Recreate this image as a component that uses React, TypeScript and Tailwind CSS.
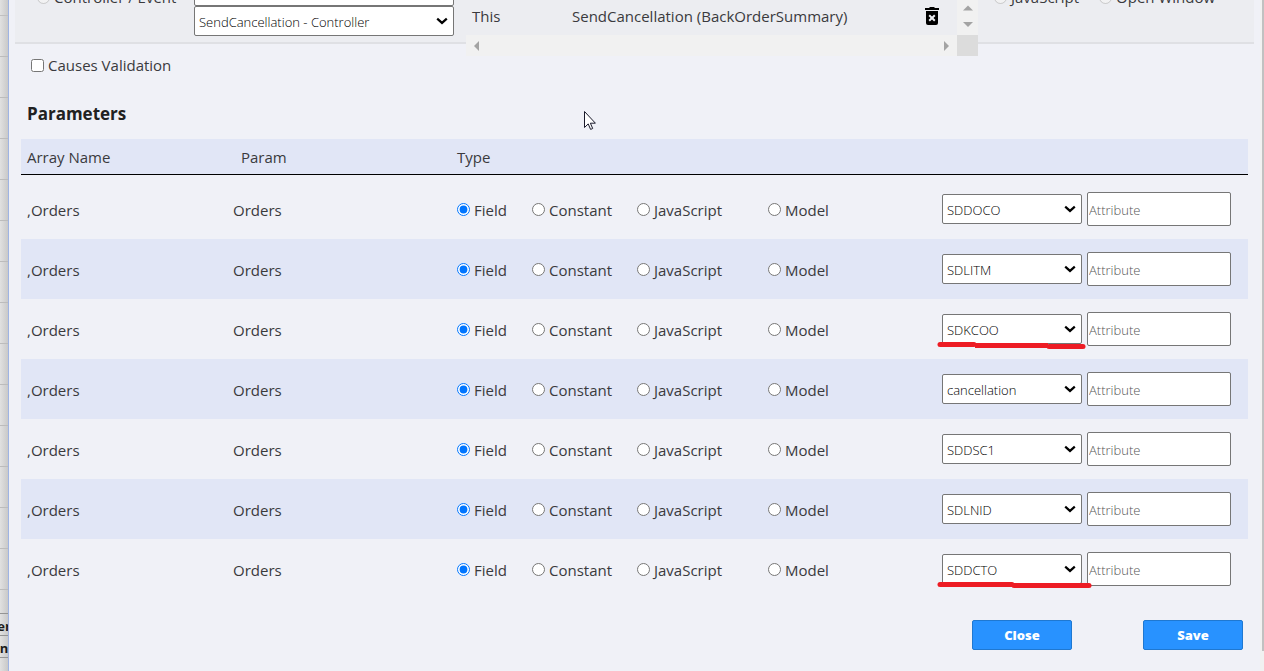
import { useState } from "react";
import type { ComponentProps } from "react";
import { clsx } from "clsx";

const TYPES = ["Field", "Constant", "JavaScript", "Model"];

type Param = { field: string; mark?: "short" | "long" };

const PARAMS: Param[] = [
  { field: "SDDOCO" },
  { field: "SDLITM" },
  { field: "SDKCOO", mark: "short" },
  { field: "cancellation" },
  { field: "SDDSC1" },
  { field: "SDLNID" },
  { field: "SDDCTO", mark: "long" },
];

function PageBehind() {
  return (
    <div
      aria-hidden="true"
      className="w-2 shrink-0 overflow-hidden bg-linear-to-r from-[#e1e1e1] to-[#c9c9c9] text-[13px] leading-6 font-bold text-[#1c1c1c]"
    >
      <div className="h-4 border-b border-[#c0c0c0]" />
      {Array.from({ length: 14 }, (_, i) => (
        <div key={i} className="h-[41px] border-b border-[#bcbcbc]" />
      ))}
      <div className="h-6 border-b border-[#949494]" />
      <div className="flex h-[22px] justify-center border-b border-[#949494]">er</div>
      <div className="flex h-[22px] justify-center border-b border-[#949494]">n</div>
    </div>
  );
}

function Select({ className, children, ...props }: ComponentProps<"select">) {
  return (
    <div className={clsx("relative flex", className)}>
      <select
        {...props}
        className="h-[30px] w-full appearance-none rounded-xs border border-[#767676] bg-white pt-0.5 pr-5 pl-1 text-[13px] font-light text-black"
      >
        {children}
      </select>
      <svg
        viewBox="0 0 12 8"
        className="pointer-events-none absolute top-[11px] right-1.5 h-2 w-3"
        fill="none"
        stroke="#000"
        strokeWidth="2.2"
        aria-hidden="true"
      >
        <path d="M1.2 1.6L6 5.9l4.8-4.3" />
      </svg>
    </div>
  );
}

function TrashIcon() {
  return (
    <svg viewBox="0 0 14 18" className="h-[18px] w-3.5" aria-hidden="true">
      <path d="M0 1h4l1-1h4l1 1h4v2H0z" fill="#000" />
      <path d="M1 4h12v12a2 2 0 0 1-2 2H3a2 2 0 0 1-2-2z" fill="#000" />
      <path d="M4.2 8.2l5.6 5.6M9.8 8.2l-5.6 5.6" stroke="#ecedf1" strokeWidth="2" />
    </svg>
  );
}

function Arrow({ d }: { d: string }) {
  return (
    <svg viewBox="0 0 10 10" className="size-2.5 fill-[#a3a3a3]" aria-hidden="true">
      <path d={d} />
    </svg>
  );
}

function ActionPanel() {
  return (
    <section className="mx-1.5 -mt-8 flex h-[76px] items-start border-b-2 border-[#dfe0e4] bg-[#ecedf1]">
      <label className="flex w-[179px] shrink-0 items-center gap-1 pt-[17px] pl-[22px]">
        <input type="radio" name="action" disabled className="size-[13px]" />
        Controller / Event
      </label>

      <div className="flex w-[260px] shrink-0 flex-col pt-2">
        <Select aria-label="Controller">
          <option></option>
        </Select>
        <Select aria-label="Event">
          <option>SendCancellation - Controller</option>
        </Select>
      </div>

      <div className="ml-3 flex h-[88px] w-[512px] shrink-0 flex-col">
        <div className="flex h-[67px] items-stretch">
          <div className="flex flex-1 items-end pb-[7px] pl-1.5">
            <span className="w-[100px]">This</span>
            <span className="flex-1">SendCancellation (BackOrderSummary)</span>
            <button type="button" aria-label="Delete" className="mr-[18px] pb-[3px]">
              <TrashIcon />
            </button>
          </div>
          <div className="flex w-[21px] flex-col items-center justify-end gap-1.5 bg-[#f1f1f1] pb-1.5">
            <Arrow d="M0 7.5h10L5 2.5z" />
            <Arrow d="M0 3h10L5 8z" />
          </div>
        </div>
        <div className="flex h-[21px]">
          <div className="flex flex-1 items-center justify-between bg-[#f1f1f1] px-1.5">
            <Arrow d="M7 0v10L2 5z" />
            <Arrow d="M3 0v10l5-5z" />
          </div>
          <div className="w-[21px] bg-[#dcdcdc]" />
        </div>
      </div>

      <div className="flex gap-5 pt-[17px] pl-4">
        <label className="flex items-center gap-1">
          <input type="radio" name="action" disabled className="size-[13px]" />
          JavaScript
        </label>
        <label className="flex items-center gap-1">
          <input type="radio" name="action" disabled className="size-[13px]" />
          Open Window
        </label>
      </div>
    </section>
  );
}

function Underline({ long }: { long: boolean }) {
  return (
    <svg
      viewBox="0 0 156 8"
      className="pointer-events-none absolute top-[27px] -left-[5px] h-2 w-[156px]"
      fill="none"
      stroke="#ed1c24"
      strokeWidth="5"
      aria-hidden="true"
    >
      {long ? (
        <>
          <path d="M3 3.5h72" strokeLinecap="round" />
          <path d="M77 4.5h75" strokeLinecap="round" />
        </>
      ) : (
        <>
          <path d="M3 3.5h34" strokeLinecap="round" />
          <path d="M38 4.5h73" />
          <path d="M112 5.5h34" strokeLinecap="round" />
        </>
      )}
    </svg>
  );
}

function ParamRow({ param, index }: { param: Param; index: number }) {
  const [type, setType] = useState("Field");

  return (
    <tr className={clsx("h-[60px]", index % 2 === 1 && "bg-[#e1e6f6]")}>
      <td className="pt-0.5 pl-1.5">,Orders</td>
      <td className="pt-0.5 pl-1.5">Orders</td>
      <td className="pl-1.5">
        <div className="grid grid-cols-[75px_105px_131px_auto]">
          {TYPES.map((name) => (
            <label key={name} className="flex items-center gap-1">
              <input
                type="radio"
                name={`type-${index}`}
                checked={type === name}
                onChange={() => setType(name)}
                className="size-[13px] accent-[#0075ff]"
              />
              <span className="pt-0.5">{name}</span>
            </label>
          ))}
        </div>
      </td>
      <td className="pl-1.5">
        <div className="flex items-center gap-[5px]">
          <div className="relative">
            <Select aria-label="Field" className="w-[140px]">
              <option>{param.field}</option>
            </Select>
            {param.mark && <Underline long={param.mark === "long"} />}
          </div>
          <input
            type="text"
            aria-label="Attribute"
            placeholder="Attribute"
            className="h-[34px] w-36 rounded-xs border border-[#767676] bg-white px-px pt-0.5 text-[13px] font-light placeholder:text-[#555]"
          />
        </div>
      </td>
    </tr>
  );
}

function Parameters() {
  return (
    <section className="mx-3">
      <h2 className="pl-1.5 text-[17px] leading-7 font-bold text-[#212121]">Parameters</h2>
      <table className="mt-[11px] w-full table-fixed border-separate border-spacing-0 text-left">
        <thead className="after:block after:h-1 after:content-['']">
          <tr className="h-9 bg-[#e1e6f6]">
            <th className="w-[206px] border-b border-black pl-1.5 font-normal">Array Name</th>
            <th className="w-[224px] border-b border-black pl-3.5 font-normal">Param</th>
            <th className="border-b border-black pl-1.5 font-normal">Type</th>
            <th className="w-[312px] border-b border-black" />
          </tr>
        </thead>
        <tbody>
          {PARAMS.map((param, i) => (
            <ParamRow key={i} param={param} index={i} />
          ))}
        </tbody>
      </table>
    </section>
  );
}

const buttonClass =
  "h-[30px] w-[100px] rounded-xs border border-[#1f78d1] bg-[#2892ff] text-[13px] font-extrabold text-white";

export default function App() {
  return (
    <div className="relative flex min-h-screen overflow-hidden bg-[#f0f1f7] font-['Open_Sans','Noto_Sans',sans-serif] text-[15px] leading-6 font-normal text-[#3a3a3d]">
      <PageBehind />

      <main className="min-w-0 flex-1 border-l border-[#9fb4e3]">
        <ActionPanel />
        <label className="mt-[9px] mb-[23px] ml-[22px] flex w-fit items-center gap-1">
          <input type="checkbox" className="size-[13px]" />
          Causes Validation
        </label>
        <Parameters />
        <div className="mt-[21px] mr-[17px] flex justify-end gap-[71px]">
          <button type="button" className={buttonClass}>Close</button>
          <button type="button" className={buttonClass}>Save</button>
        </div>
      </main>

      <div className="flex w-1 shrink-0 flex-col bg-[#f1f1f1] pb-5 pl-0.5">
        <div className="flex-1 bg-[#c1c1c1]" />
      </div>

      <svg
        viewBox="0 0 12 19"
        className="pointer-events-none absolute top-[111px] left-[584px] h-[19px] w-3"
        aria-hidden="true"
      >
        <path
          d="M.5.5v16l3.7-3.6 2.4 5.5 2.1-.9-2.3-5.3h5z"
          fill="#fff"
          stroke="#1a1a2a"
        />
      </svg>
    </div>
  );
}
